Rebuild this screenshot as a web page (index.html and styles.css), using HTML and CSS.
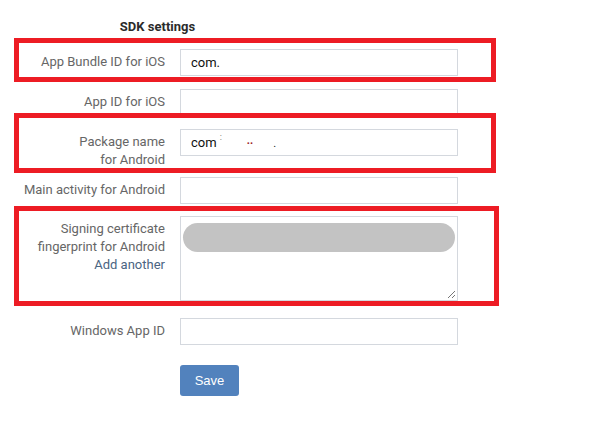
FILE: index.html
```html
<!DOCTYPE html>
<html>
<head>
<meta charset="utf-8">
<link rel="stylesheet" href="styles.css">
</head>
<body>
<form class="sdk">
  <div class="title">SDK settings</div>
  <div class="row hl hl-1">
    <label class="lbl">App Bundle ID for iOS</label>
    <div class="field">com.</div>
  </div>
  <div class="row">
    <label class="lbl">App ID for iOS</label>
    <div class="field"></div>
  </div>
  <div class="row hl hl-2 row-tall">
    <label class="lbl">Package name<br>for Android</label>
    <div class="field">com<span class="mk mk-a">:</span><span class="mk mk-b">..</span><span class="mk mk-c">.</span></div>
  </div>
  <div class="row row-before-area">
    <label class="lbl">Main activity for Android</label>
    <div class="field"></div>
  </div>
  <div class="row hl hl-3 row-area">
    <div class="lbl lbl-area">Signing certificate<br>fingerprint for Android<br><span class="add">Add another</span></div>
    <div class="area">
      <div class="pill"></div>
      <svg class="grip" width="9" height="9" viewBox="0 0 9 9"><path d="M8 1L1 8M8 5L5 8" stroke="#777" stroke-width="1" fill="none"/></svg>
    </div>
  </div>
  <div class="row row-win">
    <label class="lbl">Windows App ID</label>
    <div class="field"></div>
  </div>
  <div class="row">
    <div class="lbl"></div>
    <button type="button" class="save">Save</button>
  </div>
</form>
</body>
</html>
```
FILE: styles.css
```css
html, body {
  margin: 0;
  padding: 0;
  background: #fff;
}
body {
  font-family: Roboto, "Liberation Sans", Arial, sans-serif;
  font-size: 13px;
  color: #666;
}
.sdk {
  display: block;
  padding-top: 18px;
}
.title {
  width: 315px;
  text-align: center;
  font-weight: bold;
  color: #2b2b2b;
  line-height: 18px;
  margin-bottom: 13px;
}
.row {
  position: relative;
  display: flex;
  gap: 15px;
  margin-bottom: 13px;
}
.lbl {
  flex: 0 0 165px;
  text-align: right;
  padding-top: 4px;
  line-height: 18px;
  color: #666;
}
.field {
  box-sizing: border-box;
  width: 278px;
  height: 27px;
  border: 1px solid #d4d8de;
  padding: 0 10px;
  line-height: 25px;
  color: #111;
  font-size: 13px;
  white-space: nowrap;
}
.mk {
  display: inline-block;
  font-size: 11px;
  vertical-align: top;
  line-height: 14px;
}
.mk-a { margin-left: 3px; color: #666; font-size: 9px; }
.mk-b { margin-left: 25px; color: #9c1a1a; line-height: 22px; font-weight: bold; }
.mk-c { margin-left: 20px; color: #222; line-height: 28px; }
.row-tall { margin-bottom: 8px; }
.row-before-area { margin-bottom: 12px; }
.row-area { margin-bottom: 17px; }
.row-win { margin-bottom: 20px; }
.area {
  position: relative;
  box-sizing: border-box;
  width: 278px;
  height: 85px;
  border: 1px solid #d4d8de;
}
.pill {
  margin: 6px 2px 0 2px;
  height: 29px;
  border-radius: 15px;
  background: #c3c3c3;
}
.grip {
  position: absolute;
  right: 1px;
  bottom: 1px;
}
.add {
  color: #4a6482;
}
.save {
  width: 59px;
  height: 31px;
  border: 0;
  border-radius: 3px;
  background: #5282bd;
  color: #fff;
  font-family: "Liberation Sans", Arial, sans-serif;
  font-size: 13px;
  padding: 0;
}
.hl::after {
  content: "";
  position: absolute;
  left: 14px;
  border: 5px solid #ed1c24;
  box-sizing: border-box;
  pointer-events: none;
}
.hl-1::after { top: -11px; width: 482px; height: 44px; }
.hl-2::after { top: -16px; width: 482px; height: 60px; }
.hl-3::after { top: -10px; width: 485px; height: 100px; }
```
